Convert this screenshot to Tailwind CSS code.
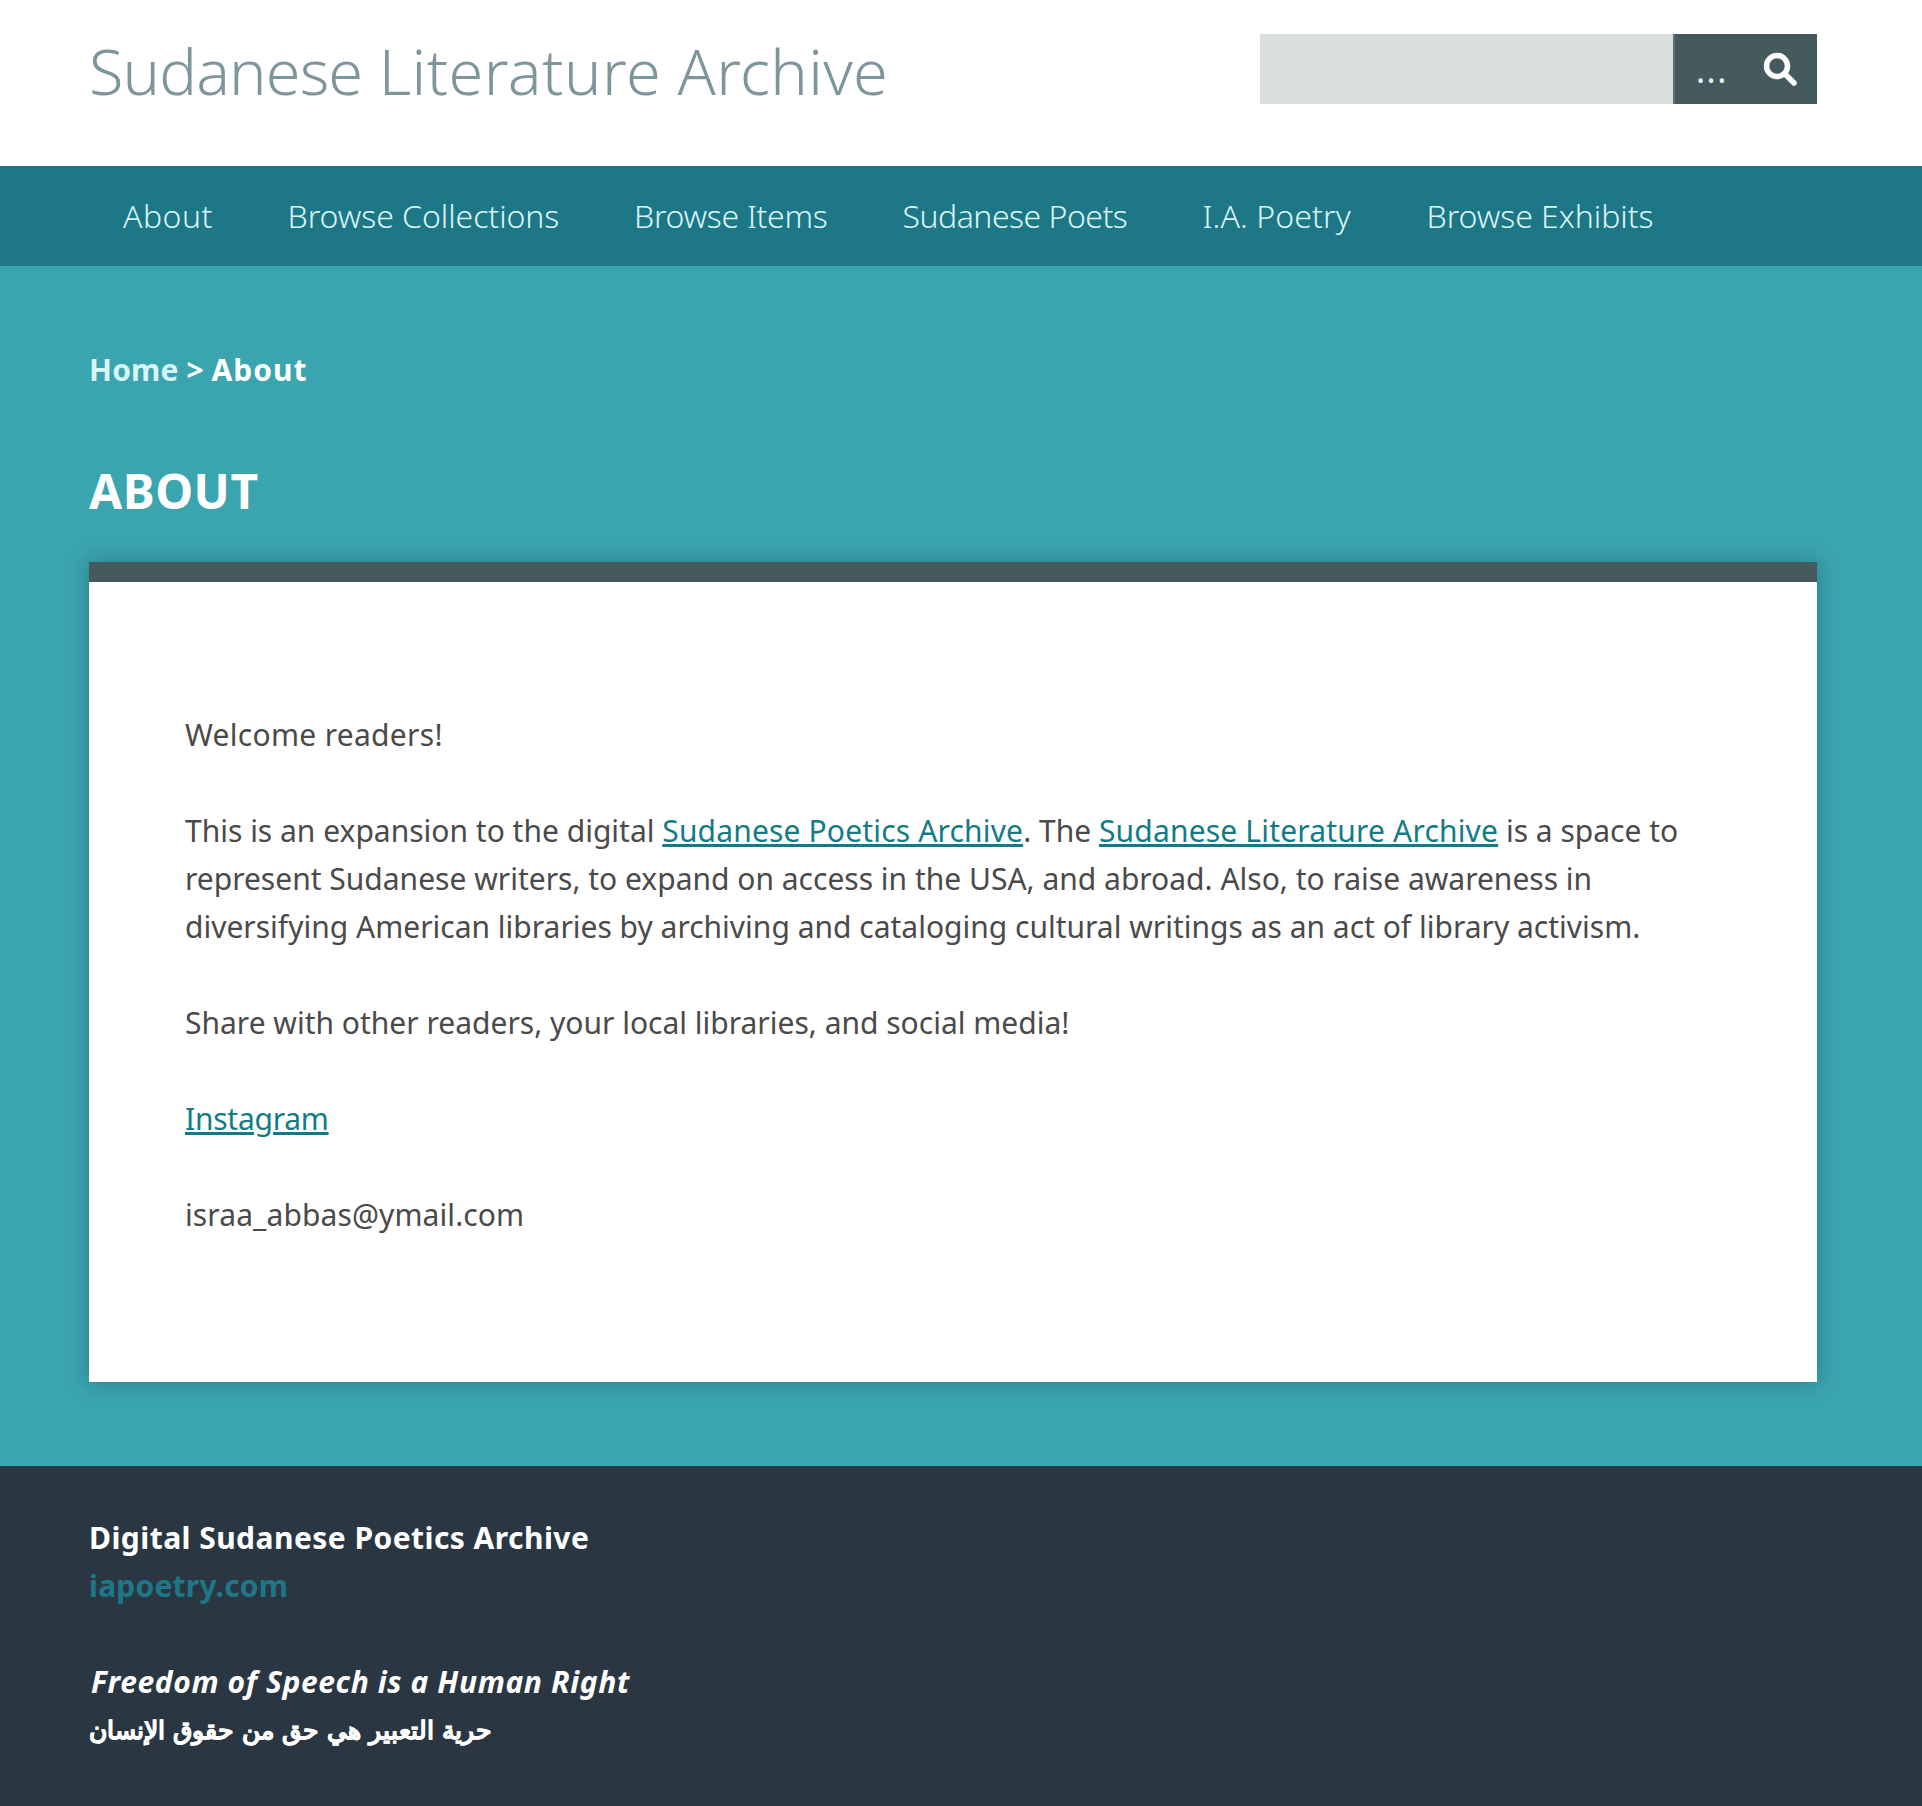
<!DOCTYPE html>
<html lang="en">
<head>
  <meta charset="UTF-8">
  <meta name="viewport" content="width=device-width, initial-scale=1.0">
  <title>About · Sudanese Literature Archive</title>
  <script src="https://cdn.jsdelivr.net/npm/@tailwindcss/browser@4"></script>
</head>
<body class="bg-[#2a3742] font-['Noto_Sans',sans-serif] text-[30px] leading-[48px] text-[#4a4a4a]">

<header class="bg-white h-[166px] pl-[89px] pr-[105px] flex justify-between items-start">
  <h1 class="mt-[32px] text-[63px] leading-[78px] font-light text-[#7c969c]"><span class="tracking-[-0.85px]">Sudanese</span> <span class="tracking-[0.45px]">Literature</span> <span class="tracking-[0.3px]">Archive</span></h1>
  <form class="mt-[34px] flex h-[70px] w-[557px]">
    <input type="text" class="flex-1 bg-[#dadede] min-w-0" aria-label="Search">
    <button type="button" class="w-[144px] bg-[#445a5f] border-l-2 border-[#5f7277] text-[#e8f7f8] flex items-center pl-[21px] pr-[20px] justify-between">
      <span class="text-[34px] leading-none tracking-[1.5px] mt-[2px]">...</span>
      <svg class="w-[34px] h-[34px]" viewBox="0 0 34 34" fill="none" stroke="#fff" stroke-width="5.5" stroke-linecap="round"><circle cx="14" cy="14" r="10.5"/><path d="M22 22l9 9"/></svg>
    </button>
  </form>
</header>

<nav class="bg-[#1d7786] h-[100px] pl-[123px] flex items-center text-[#d8f5f7] font-light text-[32px]">
  <a href="#" class="w-[164.5px] tracking-[0.5px]">About</a>
  <a href="#" class="w-[346.5px] tracking-[-0.06px]">Browse Collections</a>
  <a href="#" class="w-[268.5px] tracking-[-0.3px]">Browse Items</a>
  <a href="#" class="w-[300px] tracking-[-0.5px]">Sudanese Poets</a>
  <a href="#" class="w-[224px] tracking-[0.1px]">I.A. Poetry</a>
  <a href="#" class="tracking-[-0.06px]">Browse Exhibits</a>
</nav>

<main class="bg-[#3aa4af] px-[89px] pr-[105px] pt-[80px] pb-[84px]">
  <p class="font-bold text-white"><a href="#" class="text-[#d8f5f7] tracking-[0.2px]">Home</a> &gt; <span class="tracking-[1px]">About</span></p>
  <h2 class="mt-[67px] mb-[41px] text-[48px] leading-[60px] font-bold text-white tracking-[0.5px]">ABOUT</h2>
  <section class="bg-white border-t-[20px] border-[#445a5f] shadow-[0_0_20px_rgba(0,0,0,0.25)] pt-[129px] pb-[143px] px-[96px]">
    <p class="tracking-[0.3px]">Welcome readers!</p>
    <p class="mt-[48px]">This is an expansion to the digital <a href="#" class="underline text-[#137b85] tracking-[0.16px]">Sudanese Poetics Archive</a>. The <a href="#" class="underline text-[#137b85] tracking-[0.18px]">Sudanese Literature Archive</a> is a space to represent Sudanese writers, to expand on access in the USA, and abroad. Also, to raise awareness in diversifying American libraries by archiving and cataloging cultural writings as an act of library activism.</p>
    <p class="mt-[48px]">Share with other readers, your local libraries, and social media!</p>
    <p class="mt-[48px]"><a href="#" class="underline text-[#137b85] tracking-[-0.25px]">Instagram</a></p>
    <p class="mt-[48px] tracking-[0.1px]">israa_abbas@ymail.com</p>
  </section>
</main>

<footer class="bg-[#2a3742] px-[89px] pt-[48px] h-[340px] font-bold text-white">
  <p class="tracking-[0.45px]">Digital Sudanese Poetics Archive</p>
  <p><a href="#" class="text-[#1d7786] tracking-[0.2px]">iapoetry.com</a></p>
  <p class="mt-[48px] ml-[2px] italic tracking-[0.6px]">Freedom of Speech is a Human Right</p>
  <p class="font-['Liberation_Sans',sans-serif] text-[25.2px] [-webkit-text-stroke:0.5px_white] [word-spacing:1.4px]">حرية التعبير هي حق من حقوق الإنسان</p>
</footer>

</body>
</html>
